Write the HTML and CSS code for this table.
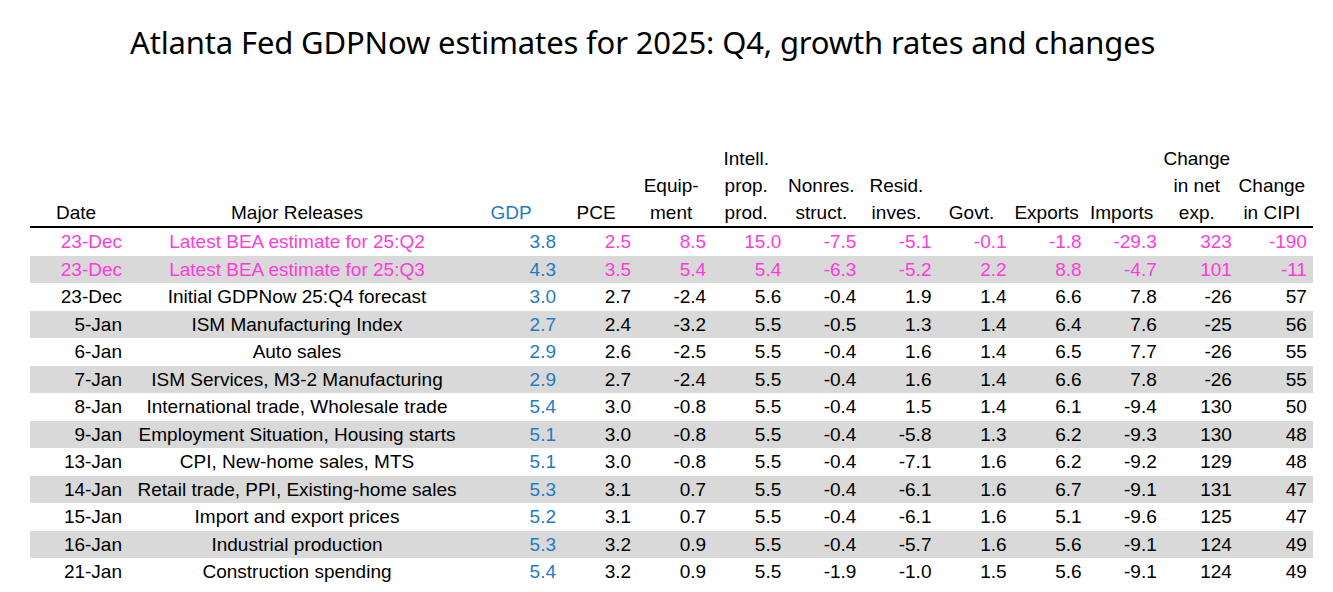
FILE: index.html
```html
<!DOCTYPE html>
<html>
<head>
<meta charset="utf-8">
<link rel="stylesheet" href="styles.css">
</head>
<body>
<h1 class="title">Atlanta Fed GDPNow estimates for 2025: Q4, growth rates and changes</h1>
<div class="table">
  <div class="row head">
    <div class="c date">Date</div>
    <div class="c rel">Major Releases</div>
    <div class="c num gdp">GDP</div>
    <div class="c num">PCE</div>
    <div class="c num">Equip-<br>ment</div>
    <div class="c num">Intell.<br>prop.<br>prod.</div>
    <div class="c num">Nonres.<br>struct.</div>
    <div class="c num">Resid.<br>inves.</div>
    <div class="c num">Govt.</div>
    <div class="c num">Exports</div>
    <div class="c num">Imports</div>
    <div class="c num">Change<br>in net<br>exp.</div>
    <div class="c num">Change<br>in CIPI</div>
  </div>
  <div class="row pink">
    <div class="c date">23-Dec</div><div class="c rel">Latest BEA estimate for 25:Q2</div>
    <div class="c num gdp">3.8</div><div class="c num">2.5</div><div class="c num">8.5</div><div class="c num">15.0</div><div class="c num">-7.5</div><div class="c num">-5.1</div><div class="c num">-0.1</div><div class="c num">-1.8</div><div class="c num">-29.3</div><div class="c num">323</div><div class="c num">-190</div>
  </div>
  <div class="row pink alt">
    <div class="c date">23-Dec</div><div class="c rel">Latest BEA estimate for 25:Q3</div>
    <div class="c num gdp">4.3</div><div class="c num">3.5</div><div class="c num">5.4</div><div class="c num">5.4</div><div class="c num">-6.3</div><div class="c num">-5.2</div><div class="c num">2.2</div><div class="c num">8.8</div><div class="c num">-4.7</div><div class="c num">101</div><div class="c num">-11</div>
  </div>
  <div class="row">
    <div class="c date">23-Dec</div><div class="c rel">Initial GDPNow 25:Q4 forecast</div>
    <div class="c num gdp">3.0</div><div class="c num">2.7</div><div class="c num">-2.4</div><div class="c num">5.6</div><div class="c num">-0.4</div><div class="c num">1.9</div><div class="c num">1.4</div><div class="c num">6.6</div><div class="c num">7.8</div><div class="c num">-26</div><div class="c num">57</div>
  </div>
  <div class="row alt">
    <div class="c date">5-Jan</div><div class="c rel">ISM Manufacturing Index</div>
    <div class="c num gdp">2.7</div><div class="c num">2.4</div><div class="c num">-3.2</div><div class="c num">5.5</div><div class="c num">-0.5</div><div class="c num">1.3</div><div class="c num">1.4</div><div class="c num">6.4</div><div class="c num">7.6</div><div class="c num">-25</div><div class="c num">56</div>
  </div>
  <div class="row">
    <div class="c date">6-Jan</div><div class="c rel">Auto sales</div>
    <div class="c num gdp">2.9</div><div class="c num">2.6</div><div class="c num">-2.5</div><div class="c num">5.5</div><div class="c num">-0.4</div><div class="c num">1.6</div><div class="c num">1.4</div><div class="c num">6.5</div><div class="c num">7.7</div><div class="c num">-26</div><div class="c num">55</div>
  </div>
  <div class="row alt">
    <div class="c date">7-Jan</div><div class="c rel">ISM Services, M3-2 Manufacturing</div>
    <div class="c num gdp">2.9</div><div class="c num">2.7</div><div class="c num">-2.4</div><div class="c num">5.5</div><div class="c num">-0.4</div><div class="c num">1.6</div><div class="c num">1.4</div><div class="c num">6.6</div><div class="c num">7.8</div><div class="c num">-26</div><div class="c num">55</div>
  </div>
  <div class="row">
    <div class="c date">8-Jan</div><div class="c rel">International trade, Wholesale trade</div>
    <div class="c num gdp">5.4</div><div class="c num">3.0</div><div class="c num">-0.8</div><div class="c num">5.5</div><div class="c num">-0.4</div><div class="c num">1.5</div><div class="c num">1.4</div><div class="c num">6.1</div><div class="c num">-9.4</div><div class="c num">130</div><div class="c num">50</div>
  </div>
  <div class="row alt">
    <div class="c date">9-Jan</div><div class="c rel">Employment Situation, Housing starts</div>
    <div class="c num gdp">5.1</div><div class="c num">3.0</div><div class="c num">-0.8</div><div class="c num">5.5</div><div class="c num">-0.4</div><div class="c num">-5.8</div><div class="c num">1.3</div><div class="c num">6.2</div><div class="c num">-9.3</div><div class="c num">130</div><div class="c num">48</div>
  </div>
  <div class="row">
    <div class="c date">13-Jan</div><div class="c rel">CPI, New-home sales, MTS</div>
    <div class="c num gdp">5.1</div><div class="c num">3.0</div><div class="c num">-0.8</div><div class="c num">5.5</div><div class="c num">-0.4</div><div class="c num">-7.1</div><div class="c num">1.6</div><div class="c num">6.2</div><div class="c num">-9.2</div><div class="c num">129</div><div class="c num">48</div>
  </div>
  <div class="row alt">
    <div class="c date">14-Jan</div><div class="c rel">Retail trade, PPI, Existing-home sales</div>
    <div class="c num gdp">5.3</div><div class="c num">3.1</div><div class="c num">0.7</div><div class="c num">5.5</div><div class="c num">-0.4</div><div class="c num">-6.1</div><div class="c num">1.6</div><div class="c num">6.7</div><div class="c num">-9.1</div><div class="c num">131</div><div class="c num">47</div>
  </div>
  <div class="row">
    <div class="c date">15-Jan</div><div class="c rel">Import and export prices</div>
    <div class="c num gdp">5.2</div><div class="c num">3.1</div><div class="c num">0.7</div><div class="c num">5.5</div><div class="c num">-0.4</div><div class="c num">-6.1</div><div class="c num">1.6</div><div class="c num">5.1</div><div class="c num">-9.6</div><div class="c num">125</div><div class="c num">47</div>
  </div>
  <div class="row alt">
    <div class="c date">16-Jan</div><div class="c rel">Industrial production</div>
    <div class="c num gdp">5.3</div><div class="c num">3.2</div><div class="c num">0.9</div><div class="c num">5.5</div><div class="c num">-0.4</div><div class="c num">-5.7</div><div class="c num">1.6</div><div class="c num">5.6</div><div class="c num">-9.1</div><div class="c num">124</div><div class="c num">49</div>
  </div>
  <div class="row">
    <div class="c date">21-Jan</div><div class="c rel">Construction spending</div>
    <div class="c num gdp">5.4</div><div class="c num">3.2</div><div class="c num">0.9</div><div class="c num">5.5</div><div class="c num">-1.9</div><div class="c num">-1.0</div><div class="c num">1.5</div><div class="c num">5.6</div><div class="c num">-9.1</div><div class="c num">124</div><div class="c num">49</div>
  </div>
</div>
</body>
</html>
```
FILE: styles.css
```css
html, body {
  margin: 0;
  padding: 0;
  background: #ffffff;
}
.title {
  margin: 24px 0 0 0;
  padding-left: 130px;
  font-family: "Noto Sans", sans-serif;
  font-weight: 400;
  font-size: 31px;
  line-height: 37px;
  letter-spacing: -0.15px;
  color: #000;
  white-space: nowrap;
}
.table {
  margin: 84px 0 0 30px;
  width: 1283px;
  font-family: "Liberation Sans", Arial, sans-serif;
  font-size: 19px;
  color: #000;
}
.row {
  display: grid;
  grid-template-columns: 98px 338px 95px repeat(10, 75.1px);
  height: 27.5px;
  line-height: 27.5px;
  white-space: nowrap;
}
.row.head {
  height: auto;
  line-height: 27px;
  align-items: end;
  border-bottom: 2px solid #000;
}
.row.head .c {
  text-align: center;
}
.row.alt {
  background: #d9d9d9;
}
.c.date {
  text-align: right;
  padding-right: 6px;
}
.c.rel {
  text-align: center;
}
.c.num {
  text-align: right;
  padding-right: 5px;
}
.c.gdp {
  color: #1f7bc6;
}
.row.pink .c {
  color: #ff3cd9;
}
.row.pink .c.gdp {
  color: #1f7bc6;
}
```
